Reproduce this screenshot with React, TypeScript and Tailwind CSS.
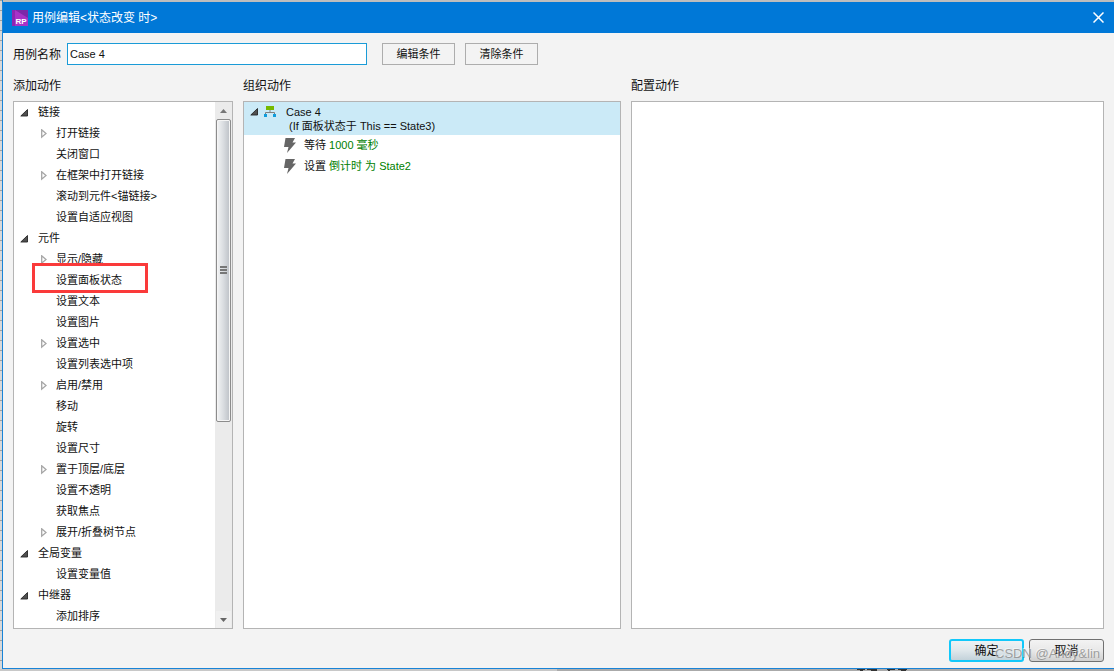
import { useState } from "react";
import clsx from "clsx";

type TreeItem = { label: string; expandable?: boolean; marked?: boolean };
type TreeGroup = { label: string; items: TreeItem[] };

const groups: TreeGroup[] = [
  {
    label: "链接",
    items: [
      { label: "打开链接", expandable: true },
      { label: "关闭窗口" },
      { label: "在框架中打开链接", expandable: true },
      { label: "滚动到元件<锚链接>" },
      { label: "设置自适应视图" },
    ],
  },
  {
    label: "元件",
    items: [
      { label: "显示/隐藏", expandable: true },
      { label: "设置面板状态", marked: true },
      { label: "设置文本" },
      { label: "设置图片" },
      { label: "设置选中", expandable: true },
      { label: "设置列表选中项" },
      { label: "启用/禁用", expandable: true },
      { label: "移动" },
      { label: "旋转" },
      { label: "设置尺寸" },
      { label: "置于顶层/底层", expandable: true },
      { label: "设置不透明" },
      { label: "获取焦点" },
      { label: "展开/折叠树节点", expandable: true },
    ],
  },
  { label: "全局变量", items: [{ label: "设置变量值" }] },
  { label: "中继器", items: [{ label: "添加排序" }] },
];

const actions = [
  { verb: "等待", detail: "1000 毫秒" },
  { verb: "设置", detail: "倒计时 为 State2" },
];

function OpenArrow() {
  return (
    <svg width="8" height="8" viewBox="0 0 8 8" className="shrink-0" aria-hidden="true">
      <path d="M7.5 .5v6.5H.8z" fill="#505050" stroke="#262626" strokeWidth=".9" />
    </svg>
  );
}

function ClosedArrow() {
  return (
    <svg width="6" height="10" viewBox="0 0 6 10" className="shrink-0" aria-hidden="true">
      <path d="M.7 .8v7.4L5 4.5z" fill="#fff" stroke="#a6a6a6" strokeWidth="1.3" />
    </svg>
  );
}

function CaseIcon() {
  return (
    <svg width="12" height="12" viewBox="0 0 12 12" className="shrink-0" aria-hidden="true">
      <path d="M6 4v3M1.5 9V6.5h9V9" fill="none" stroke="#808080" />
      <path d="M2 0h8v4H2z" fill="#76b900" />
      <path d="M0 8h3v3H0zM9 8h3v3H9z" fill="#109cdb" />
    </svg>
  );
}

function BoltIcon() {
  return (
    <svg width="12" height="16" viewBox="0 0 12 16" className="shrink-0" aria-hidden="true">
      <path d="M1.5 0H11L8.5 4.5H12L3 15l1.5-6H0z" fill="#666" />
    </svg>
  );
}

function AppLogo() {
  return (
    <svg width="16" height="16" viewBox="0 0 16 16" className="shrink-0" aria-hidden="true">
      <path d="M0 0h16v16H0z" fill="#a833c8" />
      <path d="M0 0h3v16H0z" fill="#8f25b2" />
      <path d="M3 0h13v8z" fill="#7d28a8" />
      <text x="9" y="14" textAnchor="middle" fontSize="8" fontWeight="bold" fill="#fff">
        RP
      </text>
    </svg>
  );
}

function ScrollBar() {
  return (
    <div className="flex w-[17px] shrink-0 flex-col bg-[#ebebeb] px-px" aria-hidden="true">
      <div className="flex h-[17px] shrink-0 items-center justify-center">
        <svg width="7" height="4" viewBox="0 0 7 4">
          <path d="M0 4l3.5-4L7 4z" fill="#777" />
        </svg>
      </div>
      <div className="min-h-0 flex-1">
        <div className="flex h-[61.5%] w-[15px] flex-col items-center justify-center gap-px rounded-xs border border-[#8c8c8c] bg-linear-to-r from-[#f3f4f5] via-[#d9dce0] to-[#bcc0c6] shadow-[inset_0_0_0_1px_#f5f5f5]">
          <span className="h-0.5 w-[7px] bg-[#777]" />
          <span className="h-0.5 w-[7px] bg-[#777]" />
          <span className="h-0.5 w-[7px] bg-[#777]" />
        </div>
      </div>
      <div className="flex h-[17px] shrink-0 items-center justify-center bg-[#f0f0f0]">
        <svg width="7" height="4" viewBox="0 0 7 4">
          <path d="M0 0l3.5 4L7 0z" fill="#666" />
        </svg>
      </div>
    </div>
  );
}

function ActionTree() {
  const [closed, setClosed] = useState<string[]>([]);

  const toggle = (label: string) => {
    setClosed((prev) => (prev.includes(label) ? prev.filter((l) => l !== label) : [...prev, label]));
  };

  return (
    <ul className="min-w-0 flex-1 overflow-hidden whitespace-nowrap text-[11px]">
      {groups.map((group) => (
        <li key={group.label}>
          <button
            type="button"
            className="flex h-[21px] w-full items-center gap-2.5 pl-1.5"
            aria-expanded={!closed.includes(group.label)}
            onClick={() => toggle(group.label)}
          >
            <OpenArrow />
            {group.label}
          </button>
          {!closed.includes(group.label) && (
            <ul>
              {group.items.map((item) => (
                <li key={item.label} className="relative">
                  <button type="button" className="flex h-[21px] w-full items-center pl-[27px]">
                    <span className="w-[15px] shrink-0">{item.expandable && <ClosedArrow />}</span>
                    {item.label}
                  </button>
                  {item.marked && (
                    <span className="pointer-events-none absolute -top-[7px] -bottom-0.5 left-[18px] w-[116px] border-3 border-[#fa3a3a]" />
                  )}
                </li>
              ))}
            </ul>
          )}
        </li>
      ))}
    </ul>
  );
}

function Panel({ title, children, className }: { title: string; children?: React.ReactNode; className?: string }) {
  return (
    <section className="flex min-h-0 min-w-0 flex-col gap-1.5">
      <h2 className="h-[18px] text-xs leading-[18px]">{title}</h2>
      <div className={clsx("min-h-0 flex-1 overflow-hidden border border-[#b4b4b4] bg-white", className)}>{children}</div>
    </section>
  );
}

export default function App() {
  const [name, setName] = useState("Case 4");

  return (
    <div className="relative flex h-screen flex-col overflow-hidden bg-[#b9b9b9] font-['Liberation_Sans','Noto_Sans_CJK_SC',sans-serif] text-[#111]">
      <div className="flex min-h-0 flex-1 bg-[repeating-linear-gradient(to_bottom,#a0a0a0_0px,#a0a0a0_1px,#d8d8d8_1px,#d8d8d8_10px)] pl-0.5">
        <main className="flex min-h-0 min-w-0 flex-1 flex-col border-b border-l border-[#1883d7] bg-[#f3f3f3]">
          <header className="flex h-[33px] shrink-0 items-center gap-1 border-t-2 border-[#bdbdbd] bg-[#0078d7] pr-2.5 pl-[9px] text-white">
            <AppLogo />
            <h1 className="flex-1 text-xs">用例编辑&lt;状态改变 时&gt;</h1>
            <button type="button" aria-label="关闭">
              <svg width="11" height="11" viewBox="0 0 11 11">
                <path d="M.5.5l10 10M10.5.5l-10 10" stroke="#fff" strokeWidth="1.5" />
              </svg>
            </button>
          </header>

          <div className="flex min-h-0 flex-1 flex-col px-2.5 pt-2.5 pb-1.5">
            <div className="flex h-[22px] shrink-0 items-center">
              <label htmlFor="case-name" className="w-[54px] pt-0.5 text-xs">
                用例名称
              </label>
              <input
                id="case-name"
                value={name}
                onChange={(e) => setName(e.target.value)}
                className="h-[22px] w-[300px] border border-[#1a9bd7] bg-white px-0.5 text-[11px] outline-none"
              />
              <button type="button" className="ml-[15px] h-[22px] w-[73px] border border-[#adadad] text-[11px]">
                编辑条件
              </button>
              <button type="button" className="ml-2.5 h-[22px] w-[73px] border border-[#adadad] text-[11px]">
                清除条件
              </button>
            </div>

            <div className="mt-3 grid min-h-0 flex-1 grid-cols-[220px_378fr_473fr] grid-rows-1 gap-2.5">
              <Panel title="添加动作" className="flex">
                <ActionTree />
                <ScrollBar />
              </Panel>

              <Panel title="组织动作" className="text-[11px]">
                <div className="flex h-[33px] bg-[#cbeaf7] pt-1 pl-1.5 leading-[14px]">
                  <span className="pt-0.5">
                    <OpenArrow />
                  </span>
                  <span className="ml-1.5">
                    <CaseIcon />
                  </span>
                  <p className="ml-2.5 -mt-px">
                    Case 4<br />
                    <span className="ml-[3px]">(If 面板状态于 This == State3)</span>
                  </p>
                </div>
                <ul>
                  {actions.map((action) => (
                    <li key={action.verb} className="flex h-[21px] items-center gap-2 pl-10">
                      <BoltIcon />
                      <span>
                        {action.verb} <span className="text-[#008000]">{action.detail}</span>
                      </span>
                    </li>
                  ))}
                </ul>
              </Panel>

              <Panel title="配置动作" />
            </div>

            <footer className="mt-2.5 flex shrink-0 justify-end gap-[5px] text-xs">
              <button
                type="button"
                className="h-[23px] w-[75px] rounded-[3px] border-2 border-[#12c8fa] bg-linear-to-b from-[#eef2f4] via-[#dfe7eb] to-[#c3d2da]"
              >
                确定
              </button>
              <button
                type="button"
                className="h-[23px] w-[75px] rounded-[3px] border border-[#707070] bg-linear-to-b from-[#f3f3f3] via-[#e8e8e8] to-[#d0d0d0]"
              >
                取消
              </button>
            </footer>
          </div>
        </main>
      </div>

      {/* sliver of the window behind the dialog */}
      <div className="flex h-0.5 shrink-0 bg-linear-to-r from-[#c8c8c8] from-50% to-[#aaa] to-50%">
        <svg className="ml-auto mr-[207px]" width="50" height="2" viewBox="0 0 50 2" aria-hidden="true">
          <path d="M0 .5h8M10 .5h10M3 1.5h3M14 1.5h6M30 .5h8M41 .5h9M31 1.5h2M44 1.5h5" stroke="#333" />
        </svg>
      </div>

      <span className="pointer-events-none absolute right-[14px] bottom-[9px] text-[13px] leading-4 text-[#8c8c8c]/80 [text-shadow:-1px_-1px_0_rgb(255_255_255/0.5)]">
        CSDN @Andy&amp;lin
      </span>
    </div>
  );
}
